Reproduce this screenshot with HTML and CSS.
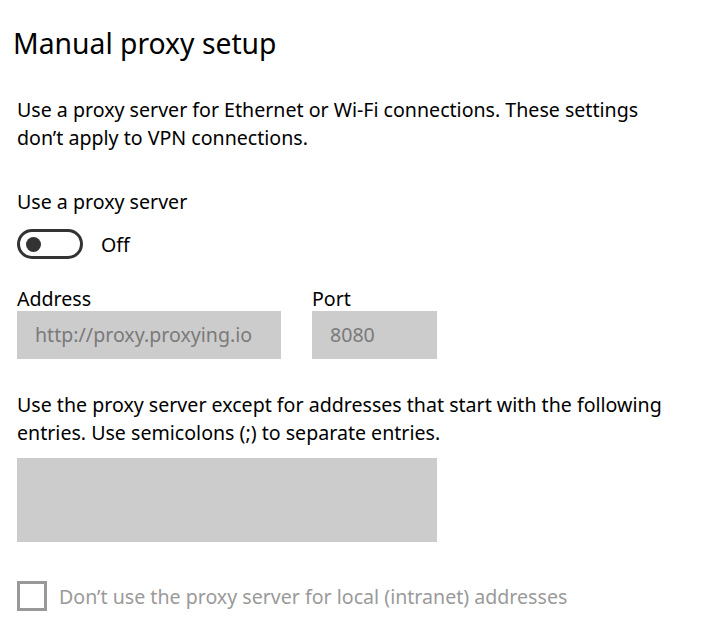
FILE: index.html
```
<!DOCTYPE html>
<html lang="en">
<head>
    <meta charset="UTF-8">
    <title>Proxy</title>
    <link rel="stylesheet" href="styles.css">
</head>
<body>
    <div class="page">
        <h1 class="title">Manual proxy setup</h1>

        <p class="intro">Use a proxy server for Ethernet or Wi-Fi connections. These settings don’t apply to VPN connections.</p>

        <div class="setting">
            <div class="setting-label">Use a proxy server</div>
            <div class="toggle-row">
                <span class="toggle"><span class="knob"></span></span>
                <span class="toggle-text">Off</span>
            </div>
        </div>

        <div class="fields">
            <div class="field">
                <label class="field-label">Address</label>
                <div class="input address">http://proxy.proxying.io</div>
            </div>
            <div class="field">
                <label class="field-label">Port</label>
                <div class="input port">8080</div>
            </div>
        </div>

        <p class="except">Use the proxy server except for addresses that start with the following entries. Use semicolons (;) to separate entries.</p>
        <div class="textbox"></div>

        <div class="check-row">
            <span class="checkbox"></span>
            <span class="check-text">Don’t use the proxy server for local (intranet) addresses</span>
        </div>
    </div>
</body>
</html>
```

FILE: styles.css
```
* {
    margin: 0;
    padding: 0;
    box-sizing: border-box;
}

body {
    font-family: "Noto Sans", "Open Sans", sans-serif;
    background-color: #ffffff;
    color: #000000;
}

.page {
    padding: 23px 17px 0 17px;
    width: 701px;
}

.title {
    font-size: 28.3px;
    font-weight: normal;
    line-height: 40px;
    margin-left: -4px;
}

.intro, .except {
    font-size: 19.6px;
    line-height: 28px;
    max-width: 660px;
}

.intro {
    margin-top: 33px;
}

/* Toggle */
.setting {
    margin-top: 36px;
}

.setting-label {
    font-size: 19.6px;
    line-height: 28px;
}

.toggle-row {
    display: flex;
    align-items: center;
    gap: 18px;
    margin-top: 13px;
}

.toggle {
    width: 66px;
    height: 30px;
    border: 3px solid #333333;
    border-radius: 15px;
    display: flex;
    align-items: center;
    padding-left: 6px;
}

.knob {
    width: 15px;
    height: 15px;
    border-radius: 50%;
    background-color: #333333;
}

.toggle-text {
    font-size: 19.6px;
}

/* Address / Port */
.fields {
    display: flex;
    gap: 31px;
    margin-top: 27px;
}

.field-label {
    display: block;
    font-size: 19.6px;
    line-height: 25px;
}

.input {
    height: 48px;
    background-color: #cccccc;
    color: #7a7a7a;
    font-size: 19.6px;
    line-height: 48px;
    padding-left: 18px;
}

.address {
    width: 264px;
}

.port {
    width: 125px;
}

.except {
    margin-top: 32px;
}

.textbox {
    width: 420px;
    height: 84px;
    background-color: #cccccc;
    margin-top: 11px;
}

/* Checkbox */
.check-row {
    display: flex;
    align-items: center;
    gap: 12px;
    margin-top: 39px;
}

.checkbox {
    width: 30px;
    height: 30px;
    border: 3px solid #999999;
}

.check-text {
    font-size: 19.6px;
    color: #9a9a9a;
}
```
